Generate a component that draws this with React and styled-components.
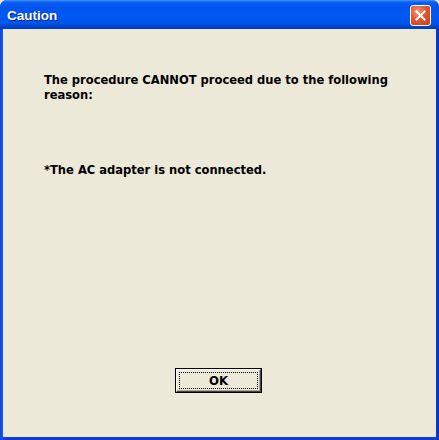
import React from 'react';
import styled, { createGlobalStyle } from 'styled-components';

const GlobalStyle = createGlobalStyle`
  html, body {
    margin: 0;
    padding: 0;
    background: #ece9d8;
  }
`;

const Window = styled.div`
  width: 439px;
  height: 440px;
  display: flex;
  flex-direction: column;
  background: linear-gradient(to right, #0842d4 0, #1a5cf0 2px, #0a3fd8 4px, #0a3fd8 calc(100% - 4px), #0832b8 100%);
  border-radius: 7px 7px 0 0;
  overflow: hidden;
  box-sizing: border-box;
`;

const TitleBar = styled.div`
  height: 29px;
  flex: none;
  display: flex;
  align-items: center;
  justify-content: space-between;
  padding: 0 8px 0 7px;
  background: linear-gradient(
    to bottom,
    #3d95ff 0%,
    #0a5ef2 8%,
    #0053ee 25%,
    #0058f2 55%,
    #0055ea 80%,
    #0043cf 92%,
    #003bc0 100%
  );
`;

const Title = styled.span`
  font-family: "Liberation Sans", Arial, sans-serif;
  font-weight: bold;
  font-size: 13.5px;
  color: #ffffff;
  text-shadow: 1px 1px 0 #0a1e8c;
  margin-top: 2px;
`;

const CloseButton = styled.div`
  width: 21px;
  height: 21px;
  box-sizing: border-box;
  border: 1px solid #ffffff;
  border-radius: 3px;
  background: radial-gradient(circle at 35% 30%, #f29a7c 0%, #e0552f 45%, #c4401b 100%);
  display: flex;
  align-items: center;
  justify-content: center;
  margin-top: 1px;
`;

const Body = styled.div`
  flex: 1;
  margin: 0 3px 3px 3px;
  background: #ece9d8;
  display: flex;
  flex-direction: column;
  padding: 43px 0 0 41px;
  font-family: "DejaVu Sans Condensed", "DejaVu Sans", sans-serif;
  font-stretch: condensed;
  font-weight: bold;
  font-size: 12.8px;
  line-height: 15px;
  color: #000000;
`;

const Message = styled.p`
  margin: 0;
  width: 370px;
`;

const Reason = styled.p`
  margin: 60px 0 0 0;
`;

const Footer = styled.div`
  margin-top: auto;
  display: flex;
  justify-content: center;
  padding: 0 41px 44px 0;
`;

const OkButton = styled.button`
  width: 87px;
  height: 25px;
  box-sizing: border-box;
  padding: 0;
  border: 1px solid #000000;
  background: #ece9d8;
  display: flex;
  margin-right: 2px;
`;

const Bevel = styled.div`
  flex: 1;
  border-top: 1px solid #ffffff;
  border-left: 1px solid #ffffff;
  border-right: 1px solid #404040;
  border-bottom: 1px solid #404040;
  box-shadow: inset -1px -1px 0 #aca899;
  padding: 2px;
  display: flex;
`;

const Focus = styled.div`
  flex: 1;
  border: 1px dotted #000000;
  display: flex;
  align-items: center;
  justify-content: center;
  font-family: "DejaVu Sans Condensed", "DejaVu Sans", sans-serif;
  font-stretch: condensed;
  font-weight: bold;
  font-size: 13px;
  color: #000000;
`;

export default function App() {
  return (
    <>
      <GlobalStyle />
      <Window>
        <TitleBar>
          <Title>Caution</Title>
          <CloseButton>
            <svg width="11" height="11" viewBox="0 0 11 11">
              <path d="M1.5 1.5 L9.5 9.5 M9.5 1.5 L1.5 9.5" stroke="#ffffff" strokeWidth="2" strokeLinecap="square" />
            </svg>
          </CloseButton>
        </TitleBar>
        <Body>
          <Message>The procedure CANNOT proceed due to the following reason:</Message>
          <Reason>*The AC adapter is not connected.</Reason>
          <Footer>
            <OkButton>
              <Bevel>
                <Focus>OK</Focus>
              </Bevel>
            </OkButton>
          </Footer>
        </Body>
      </Window>
    </>
  );
}
